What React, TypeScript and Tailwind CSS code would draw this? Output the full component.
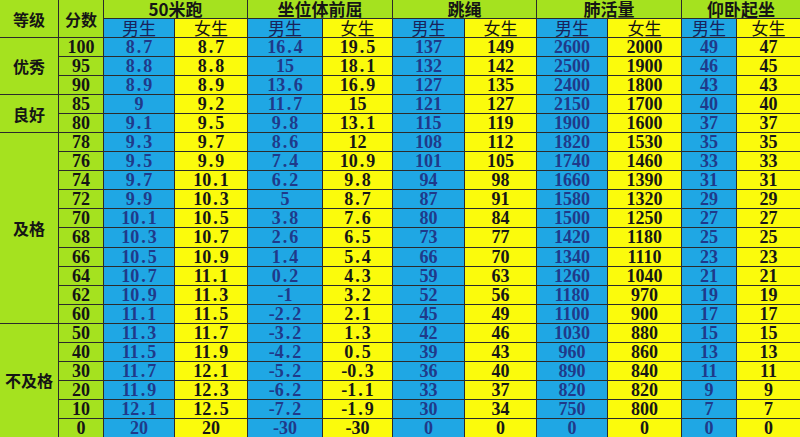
import React from 'react'

type Group = {
  label: string
  span: string
  rows: string[][]
}

const groups: Group[] = [
  {
    label: '优秀',
    span: 'row-span-3',
    rows: [
      ['100', '8.7', '8.7', '16.4', '19.5', '137', '149', '2600', '2000', '49', '47'],
      ['95', '8.8', '8.8', '15', '18.1', '132', '142', '2500', '1900', '46', '45'],
      ['90', '8.9', '8.9', '13.6', '16.9', '127', '135', '2400', '1800', '43', '43'],
    ],
  },
  {
    label: '良好',
    span: 'row-span-2',
    rows: [
      ['85', '9', '9.2', '11.7', '15', '121', '127', '2150', '1700', '40', '40'],
      ['80', '9.1', '9.5', '9.8', '13.1', '115', '119', '1900', '1600', '37', '37'],
    ],
  },
  {
    label: '及格',
    span: 'row-span-10',
    rows: [
      ['78', '9.3', '9.7', '8.6', '12', '108', '112', '1820', '1530', '35', '35'],
      ['76', '9.5', '9.9', '7.4', '10.9', '101', '105', '1740', '1460', '33', '33'],
      ['74', '9.7', '10.1', '6.2', '9.8', '94', '98', '1660', '1390', '31', '31'],
      ['72', '9.9', '10.3', '5', '8.7', '87', '91', '1580', '1320', '29', '29'],
      ['70', '10.1', '10.5', '3.8', '7.6', '80', '84', '1500', '1250', '27', '27'],
      ['68', '10.3', '10.7', '2.6', '6.5', '73', '77', '1420', '1180', '25', '25'],
      ['66', '10.5', '10.9', '1.4', '5.4', '66', '70', '1340', '1110', '23', '23'],
      ['64', '10.7', '11.1', '0.2', '4.3', '59', '63', '1260', '1040', '21', '21'],
      ['62', '10.9', '11.3', '-1', '3.2', '52', '56', '1180', '970', '19', '19'],
      ['60', '11.1', '11.5', '-2.2', '2.1', '45', '49', '1100', '900', '17', '17'],
    ],
  },
  {
    label: '不及格',
    span: 'row-span-6',
    rows: [
      ['50', '11.3', '11.7', '-3.2', '1.3', '42', '46', '1030', '880', '15', '15'],
      ['40', '11.5', '11.9', '-4.2', '0.5', '39', '43', '960', '860', '13', '13'],
      ['30', '11.7', '12.1', '-5.2', '-0.3', '36', '40', '890', '840', '11', '11'],
      ['20', '11.9', '12.3', '-6.2', '-1.1', '33', '37', '820', '820', '9', '9'],
      ['10', '12.1', '12.5', '-7.2', '-1.9', '30', '34', '750', '800', '7', '7'],
      ['0', '20', '20', '-30', '-30', '0', '0', '0', '0', '0', '0'],
    ],
  },
]

const events = ['50米跑', '坐位体前屈', '跳绳', '肺活量', '仰卧起坐']

const cjk = "font-['Noto_Sans_CJK_SC',sans-serif]"
const num = "font-['Liberation_Serif','Noto_Sans_CJK_SC',serif]"

// 宋体的小数点占半个字宽，这里给点号加一点左右留白
function Num({ value }: { value: string }) {
  const parts = value.split('.')
  if (parts.length === 1) return <>{value}</>
  return (
    <>
      {parts[0]}
      <span className="px-[2px]">.</span>
      {parts[1]}
    </>
  )
}

export default function App() {
  return (
    <div className="w-[800px] h-[437px] overflow-hidden bg-[#2b2b2b]">
      <div className="grid h-[437px] gap-px grid-cols-[58px_44px_70px_72px_74px_69px_71px_71px_70px_73px_54px_63px] grid-rows-[18px_18px_repeat(21,minmax(0,1fr))]">
        <div className={`row-span-2 bg-[#a5e21f] flex items-center justify-center text-[16px] font-bold text-[#151515] leading-none ${cjk}`}>
          等级
        </div>
        <div className={`row-span-2 bg-[#a5e21f] flex items-center justify-center text-[16px] font-bold text-[#151515] leading-none ${cjk}`}>
          分数
        </div>
        {events.map((e) => (
          <div
            key={e}
            className={`col-span-2 bg-[#a5e21f] flex items-center justify-center overflow-hidden text-[17px] font-bold text-[#151515] leading-[16px] ${cjk}`}
          >
            {e}
          </div>
        ))}
        {events.map((e) => (
          <React.Fragment key={e}>
            <div className={`bg-[#1fa7e4] flex items-center justify-center overflow-hidden text-[17px] text-[#18225a] leading-[16px] ${cjk}`}>
              男生
            </div>
            <div className={`bg-[#fbfb0c] flex items-center justify-center overflow-hidden text-[17px] text-[#141414] leading-[16px] ${cjk}`}>
              女生
            </div>
          </React.Fragment>
        ))}

        {groups.map((g) =>
          g.rows.map((row, i) => (
            <React.Fragment key={row[0]}>
              {i === 0 && (
                <div
                  className={`${g.span} bg-[#a5e21f] flex items-center justify-center text-[16px] font-bold text-[#151515] leading-none ${cjk}`}
                >
                  {g.label}
                </div>
              )}
              <div className={`bg-[#a5e21f] flex items-center justify-center overflow-hidden text-[18px] font-bold text-[#151515] leading-[16px] ${num}`}>
                {row[0]}
              </div>
              {row.slice(1).map((v, j) =>
                j % 2 === 0 ? (
                  <div
                    key={j}
                    className={`bg-[#1fa7e4] flex items-center justify-center overflow-hidden text-[18px] font-bold text-[#1f3a8a] leading-[16px] ${num}`}
                  >
                    <Num value={v} />
                  </div>
                ) : (
                  <div
                    key={j}
                    className={`bg-[#fbfb0c] flex items-center justify-center overflow-hidden text-[18px] font-bold text-[#161616] leading-[16px] ${num}`}
                  >
                    <Num value={v} />
                  </div>
                )
              )}
            </React.Fragment>
          ))
        )}
      </div>
    </div>
  )
}
